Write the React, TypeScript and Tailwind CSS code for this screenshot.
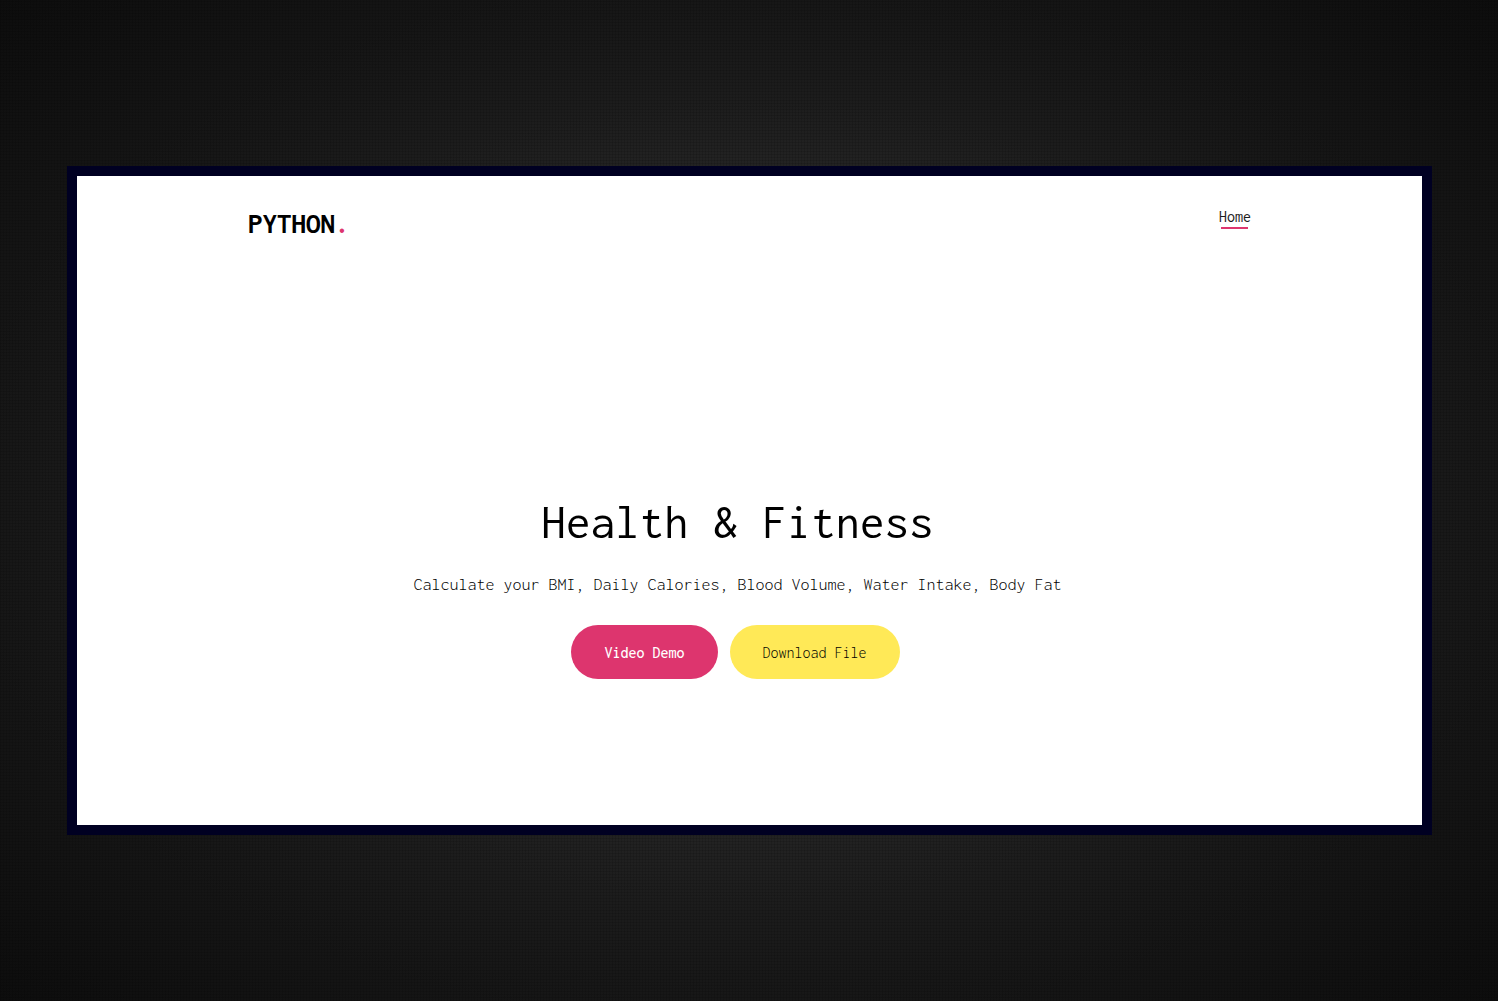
export default function App() {
  return (
    <div className="flex min-h-screen items-center justify-center bg-[#0e0e0e] bg-[repeating-linear-gradient(0deg,rgba(0,0,0,0.12)_0px_1px,transparent_1px_3px),repeating-linear-gradient(90deg,rgba(0,0,0,0.12)_0px_1px,transparent_1px_3px),radial-gradient(ellipse_at_center,#3c3c3c_0%,#2e2e2e_30%,#1c1c1c_58%,#151515_75%,#0d0d0d_100%)] pr-[66px] pl-[67px] font-[Inconsolata,'DejaVu_Sans_Mono',monospace] text-black">
      <div className="w-full border-10 border-[#000022] bg-white pb-[146px]">
        <header className="mx-auto flex w-full max-w-[1003px] items-start justify-between pt-7">
          <a href="#" className="text-[29px] leading-10 font-bold">
            PYTHON<span className="text-[#dd356e]">.</span>
          </a>
          <nav>
            <a href="#" className="flex flex-col items-center text-base leading-[26px] text-[#1c1c1c]">
              Home
              <span className="-mt-[3px] h-0.5 w-[27px] bg-[#dd356e]" />
            </a>
          </nav>
        </header>
        <main className="flex flex-col items-center pt-[248px] pr-6 text-center">
          <h1 className="text-[49px] leading-[60px]">Health &amp; Fitness</h1>
          <p className="mt-4 text-lg leading-8 font-light">
            Calculate your BMI, Daily Calories, Blood Volume, Water Intake, Body Fat
          </p>
          <div className="mt-[25px] mr-1 flex gap-3">
            <button className="rounded-full bg-[#dd356e] px-[33px] pt-4 pb-3.5 text-base font-medium text-white">Video Demo</button>
            <button className="rounded-full bg-[#ffe957] px-[33px] pt-4 pb-3.5 text-base font-light">Download File</button>
          </div>
        </main>
      </div>
    </div>
  );
}
